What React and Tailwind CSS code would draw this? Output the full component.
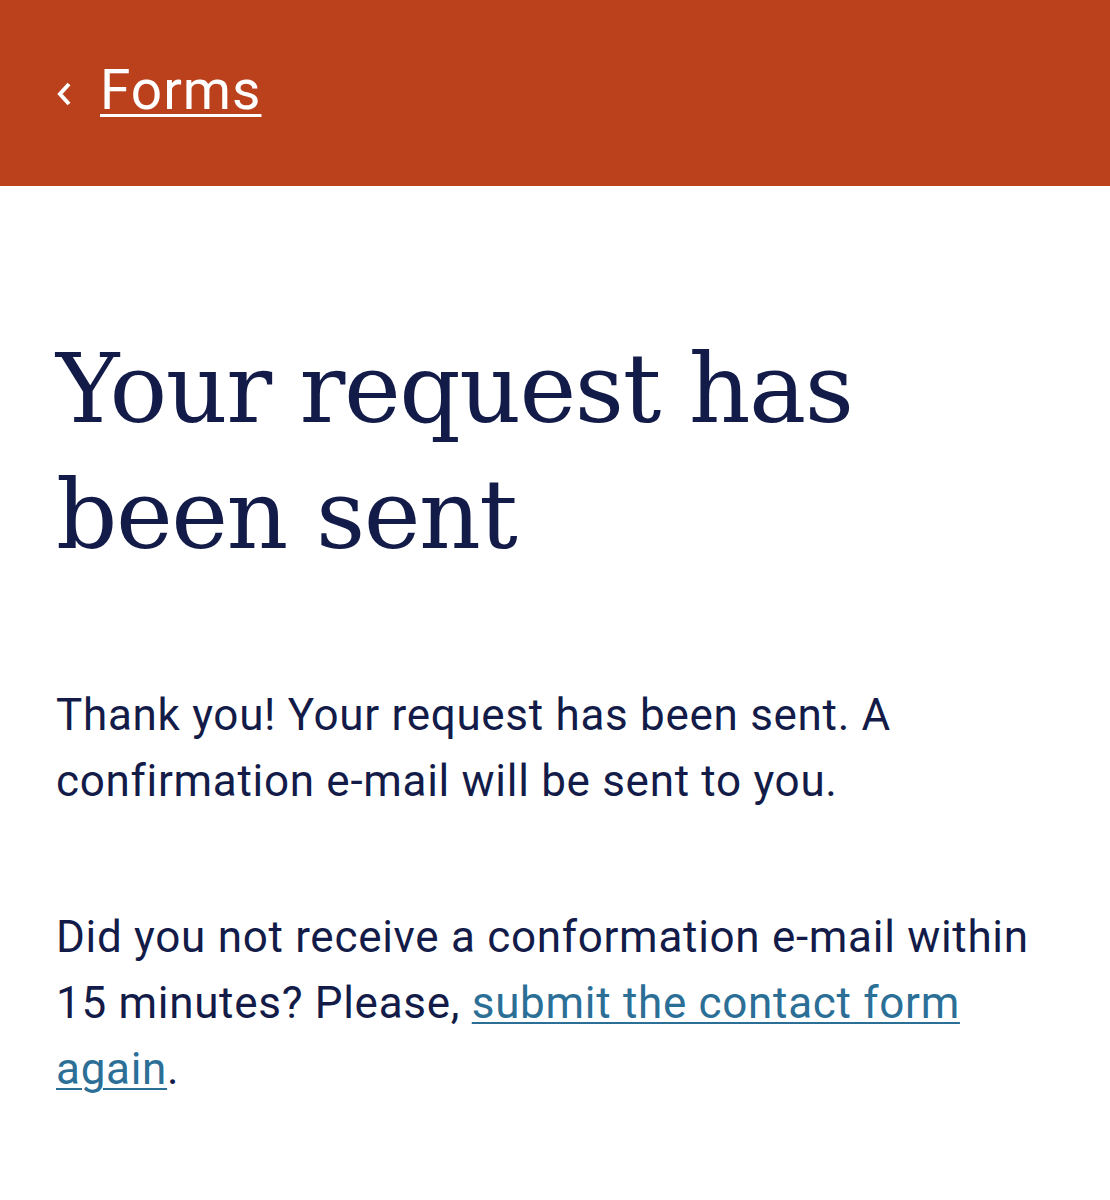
import React from "react";

const BODY = { fontFamily: "Roboto, 'Liberation Sans', sans-serif" };

function App() {
  return (
    <div className="min-h-[1200px] bg-white text-[#131b48]" style={BODY}>
      {/* top bar */}
      <header className="h-[186px] bg-[#bb411d] flex items-center px-[56px]">
        <a href="#" className="flex items-center gap-[28px] text-white -mt-[6px]">
          <svg width="16" height="26" viewBox="0 0 16 26" className="mt-[8px]">
            <path d="M13 3 L4 13 L13 23" fill="none" stroke="white" strokeWidth="4" />
          </svg>
          <span className="text-[55px] leading-none tracking-[1px] underline decoration-[3px] underline-offset-[5px]">
            Forms
          </span>
        </a>
      </header>

      <main className="px-[56px]">
        <h1
          className="mt-[140px] text-[96px] leading-[126px] font-normal tracking-[-1.5px]"
          style={{ fontFamily: "'DejaVu Serif', 'Liberation Serif', serif" }}
        >
          Your request has
          <br />
          been sent
        </h1>

        <p className="mt-[104px] text-[44px] leading-[66px] tracking-[0.7px]">
          Thank you! Your request has been sent. A
          <br />
          confirmation e-mail will be sent to you.
        </p>

        <p className="mt-[90px] text-[44px] leading-[66px] tracking-[0.7px]">
          Did you not receive a conformation e-mail within 15 minutes? Please,{" "}
          <a href="#" className="text-[#2b6f97] underline decoration-[2px] underline-offset-[4px]">
            submit the contact form again
          </a>
          .
        </p>
      </main>
    </div>
  );
}

export default App;
